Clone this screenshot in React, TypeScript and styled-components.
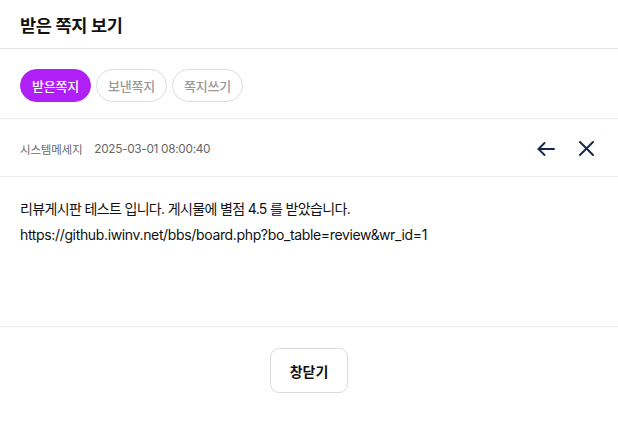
import React, { useState } from 'react';
import styled, { createGlobalStyle } from 'styled-components';

const GlobalStyle = createGlobalStyle`
  body {
    margin: 0;
    background: #fff;
    font-family: Inter, "Noto Sans CJK KR", sans-serif;
    color: #111;
  }
`;

const TABS = ['받은쪽지', '보낸쪽지', '쪽지쓰기'];

const App = () => {
  const [active, setActive] = useState<number>(0);

  return (
    <>
      <GlobalStyle />
      <Wrapper>
        <Header>
          <Title>받은 쪽지 보기</Title>
        </Header>
        <TabBar>
          {TABS.map((tab, index) => (
            <Tab key={tab} active={index === active} onClick={() => setActive(index)}>
              {tab}
            </Tab>
          ))}
        </TabBar>
        <MetaRow>
          <MetaInfo>
            <Sender>시스템메세지</Sender>
            <SentAt>2025-03-01 08:00:40</SentAt>
          </MetaInfo>
          <IconGroup>
            <IconButton aria-label="back" size={18}>
              <svg width="18" height="16" viewBox="0 0 18 16" fill="none" stroke="#15284a" strokeWidth="1.9" strokeLinecap="round" strokeLinejoin="round">
                <path d="M17 8H1.5" />
                <path d="M7.5 2L1.5 8l6 6" />
              </svg>
            </IconButton>
            <IconButton aria-label="close" size={15}>
              <svg width="15" height="15" viewBox="0 0 15 15" fill="none" stroke="#15284a" strokeWidth="1.9" strokeLinecap="round">
                <path d="M1 1l13 13" />
                <path d="M14 1L1 14" />
              </svg>
            </IconButton>
          </IconGroup>
        </MetaRow>
        <Body>
          <Line spacing={-0.65}>리뷰게시판 테스트 입니다. 게시물에 별점 4.5 를 받았습니다.</Line>
          <Line spacing={-0.35}>https://github.iwinv.net/bbs/board.php?bo_table=review&amp;wr_id=1</Line>
        </Body>
        <Footer>
          <CloseButton>창닫기</CloseButton>
        </Footer>
      </Wrapper>
    </>
  );
};

export default App;

const Wrapper = styled.div`
  width: 618px;
  display: flex;
  flex-direction: column;
`;

const Header = styled.div`
  height: 48px;
  padding: 0 20px;
  display: flex;
  align-items: center;
  border-bottom: 1px solid #e3e3e3;
`;

const Title = styled.h1`
  margin: 0;
  font-size: 17.5px;
  font-weight: 700;
  letter-spacing: -0.3px;
  color: #111;
`;

const TabBar = styled.div`
  display: flex;
  gap: 5px;
  padding: 20px 20px 16px;
  border-bottom: 1px solid #ececec;
`;

const Tab = styled.button<{ active?: boolean }>`
  height: 33px;
  padding: 0 11px;
  border-radius: 17px;
  border: 1px solid ${(props) => (props.active ? '#b01ff5' : '#dcdcdc')};
  background-color: ${(props) => (props.active ? '#b01ff5' : '#fff')};
  color: ${(props) => (props.active ? '#fff' : '#999')};
  font-family: inherit;
  font-size: 13px;
  font-weight: 500;
  letter-spacing: -0.2px;
  cursor: pointer;
`;

const MetaRow = styled.div`
  height: 58px;
  padding: 2px 20px 0;
  box-sizing: border-box;
  display: flex;
  align-items: center;
  justify-content: space-between;
  border-bottom: 1px solid #ececec;
`;

const MetaInfo = styled.div`
  display: flex;
  align-items: center;
  gap: 12px;
`;

const Sender = styled.span`
  font-size: 11.5px;
  letter-spacing: -0.2px;
  color: #6b6b6b;
`;

const SentAt = styled.span`
  font-size: 11.8px;
  letter-spacing: -0.3px;
  color: #666;
`;

const IconGroup = styled.div`
  display: flex;
  align-items: center;
  gap: 24px;
  margin-right: 4px;
`;

const IconButton = styled.button<{ size: number }>`
  border: none;
  background: none;
  padding: 0;
  width: ${(props) => props.size}px;
  height: 18px;
  display: flex;
  align-items: center;
  justify-content: center;
  cursor: pointer;
`;

const Body = styled.div`
  min-height: 150px;
  box-sizing: border-box;
  padding: 19px 20px;
  border-bottom: 1px solid #ececec;
`;

const Line = styled.p<{ spacing: number }>`
  margin: 0;
  font-size: 14px;
  line-height: 26px;
  letter-spacing: ${(props) => props.spacing}px;
  color: #111;
`;

const Footer = styled.div`
  display: flex;
  justify-content: center;
  padding: 21px 0 20px;
`;

const CloseButton = styled.button`
  width: 78px;
  height: 45px;
  border: 1px solid #dcdcdc;
  border-radius: 9px;
  background: #fff;
  font-family: inherit;
  font-size: 14px;
  font-weight: 700;
  color: #111;
  cursor: pointer;
`;
